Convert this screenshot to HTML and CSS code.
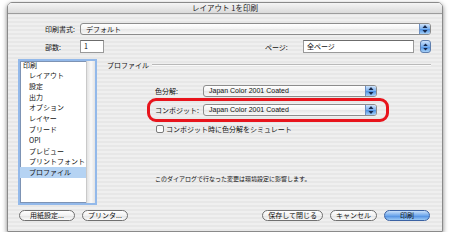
FILE: index.html
```html
<!DOCTYPE html>
<html lang="ja">
<head>
    <meta charset="UTF-8">
    <title>レイアウト 1を印刷</title>
    <link rel="stylesheet" href="styles.css">
</head>
<body>
    <div class="window">
        <div class="titlebar">レイアウト 1を印刷</div>
        <div class="content">
            <!-- Print style -->
            <div class="row row-style">
                <span class="label">印刷書式:</span>
                <div class="popup popup-style">
                    <span class="popup-text">デフォルト</span>
                    <span class="popup-arrows"><svg viewBox="0 0 10 12" width="10" height="12"><polygon points="5,2 7.5,5 2.5,5"/><polygon points="2.5,7 7.5,7 5,10"/></svg></span>
                </div>
            </div>

            <!-- Copies / pages -->
            <div class="row row-copies">
                <span class="label">部数:</span>
                <div class="field field-copies">1</div>
                <span class="label label-pages">ページ:</span>
                <div class="field field-pages">全ページ</div>
                <span class="stepper"><svg viewBox="0 0 10 12" width="10" height="12"><polygon points="5,2 7.5,5 2.5,5"/><polygon points="2.5,7 7.5,7 5,10"/></svg></span>
            </div>

            <div class="main">
                <div class="listbox">
                    <ul class="list">
                        <li class="list-root">印刷</li>
                        <li>レイアウト</li>
                        <li>設定</li>
                        <li>出力</li>
                        <li>オプション</li>
                        <li>レイヤー</li>
                        <li>ブリード</li>
                        <li>OPI</li>
                        <li>プレビュー</li>
                        <li>プリントフォント</li>
                        <li class="selected">プロファイル</li>
                    </ul>
                    <div class="scrollbar"></div>
                </div>

                <div class="panel">
                    <div class="group-title"><span>プロファイル</span></div>
                    <div class="group-body">
                        <div class="prop-row prop-sep">
                            <span class="prop-label">色分解:</span>
                            <div class="popup popup-profile">
                                <span class="popup-text latin">Japan Color 2001 Coated</span>
                                <span class="popup-arrows"><svg viewBox="0 0 10 12" width="10" height="12"><polygon points="5,2 7.5,5 2.5,5"/><polygon points="2.5,7 7.5,7 5,10"/></svg></span>
                            </div>
                        </div>
                        <div class="prop-row highlight">
                            <span class="prop-label">コンポジット:</span>
                            <div class="popup popup-profile">
                                <span class="popup-text latin">Japan Color 2001 Coated</span>
                                <span class="popup-arrows"><svg viewBox="0 0 10 12" width="10" height="12"><polygon points="5,2 7.5,5 2.5,5"/><polygon points="2.5,7 7.5,7 5,10"/></svg></span>
                            </div>
                        </div>
                        <div class="check-row">
                            <span class="checkbox"></span>
                            <span>コンポジット時に色分解をシミュレート</span>
                        </div>
                    </div>
                    <p class="note">このダイアログで行なった変更は環境設定に影響します。</p>
                </div>
            </div>

            <div class="buttons">
                <div class="btn-group">
                    <div class="btn btn-page">用紙設定...</div>
                    <div class="btn">プリンタ...</div>
                </div>
                <div class="btn-group">
                    <div class="btn">保存して閉じる</div>
                    <div class="btn">キャンセル</div>
                    <div class="btn btn-default">印刷</div>
                </div>
            </div>
        </div>
    </div>
</body>
</html>
```

FILE: styles.css
```css
body {
    margin: 0;
    background: #fff;
    font-family: "Noto Sans CJK JP", "DejaVu Sans", sans-serif;
    font-size: 7px;
    color: #111;
}
.window {
    box-sizing: border-box;
    width: 436px;
    height: 230px;
    margin: 2px 0 0 7px;
    border: 1px solid #8a8a8a;
    border-radius: 5px 5px 0 0;
    background: repeating-linear-gradient(180deg, #efefef 0, #efefef 2px, #e7e7e7 2px, #e7e7e7 4px);
    box-shadow: 0 2px 5px rgba(0, 0, 0, 0.5);
    overflow: hidden;
}
.titlebar {
    height: 10px;
    line-height: 10px;
    text-align: center;
    font-size: 7.5px;
    color: #222;
    border-bottom: 1px solid #9c9c9c;
    background: linear-gradient(#f5f5f5, #dadada);
}
.content {
    padding: 0 11px 0 10px;
}
.row {
    display: flex;
    align-items: center;
}
.row-style {
    margin-top: 9px;
    height: 12px;
}
.row-copies {
    margin-top: 5px;
    height: 13px;
}
.label {
    margin-left: 27px;
    width: 35px;
}
.label-pages {
    margin-left: 161px;
    width: 38px;
}

/* popup buttons */
.popup {
    box-sizing: border-box;
    display: flex;
    height: 12px;
    border: 1px solid #8c8c8c;
    border-radius: 3px;
    background: linear-gradient(#ffffff, #f3f3f3 50%, #e6e6e6 51%, #f8f8f8);
    overflow: hidden;
}
.popup-style {
    width: 351px;
}
.popup-profile {
    width: 174px;
}
.popup-text {
    flex: 1;
    padding-left: 5px;
    line-height: 10px;
    white-space: nowrap;
}
.latin {
    font-family: "Liberation Sans", Arial, sans-serif;
}
.popup-arrows,
.stepper {
    display: flex;
    align-items: center;
    justify-content: center;
    width: 10px;
    background: linear-gradient(#cfe3fa, #79afee 50%, #4d90e2 51%, #a6d0f7);
    border-left: 1px solid #6c8fc2;
}
.popup-arrows svg,
.stepper svg {
    fill: #17294d;
}
.stepper {
    box-sizing: border-box;
    width: 11px;
    height: 13px;
    margin-left: 6px;
    border: 1px solid #5f7fae;
    border-radius: 3px;
}

/* text fields */
.field {
    box-sizing: border-box;
    height: 13px;
    padding-left: 3px;
    line-height: 11px;
    background: #fff;
    border: 1px solid #9a9a9a;
    border-top-color: #6c6c6c;
}
.field-copies {
    width: 24px;
}
.field-pages {
    width: 111px;
}

/* list + panel */
.main {
    display: flex;
    height: 146px;
    margin-top: 6px;
}
.listbox {
    box-sizing: border-box;
    display: flex;
    width: 79px;
    height: 146px;
    border: 2px solid #93b9ea;
    background: #fff;
    box-shadow: inset 0 0 0 1px #7d93b4;
}
.list {
    flex: 1;
    margin: 0;
    padding: 0;
    list-style: none;
}
.list li {
    padding-left: 9px;
    line-height: 10.8px;
    white-space: nowrap;
}
.list .list-root {
    padding-left: 3px;
    line-height: 8px;
    margin-bottom: 1px;
}
.list .selected {
    background: #b5d3f3;
}
.scrollbar {
    width: 8px;
    border-left: 1px solid #c9c9c9;
    background: linear-gradient(90deg, #e2e2e2, #f9f9f9 50%, #e4e4e4);
}
.panel {
    flex: 1;
    margin-left: 10px;
}
.group-title {
    display: flex;
    align-items: center;
    height: 10px;
    margin-top: 1px;
}
.group-title::after {
    content: "";
    flex: 1;
    height: 1px;
    margin-left: 3px;
    background: #b9b9b9;
    border-bottom: 1px solid #fafafa;
}
.group-body {
    display: flex;
    flex-direction: column;
    align-items: flex-start;
    padding-left: 48px;
}
.prop-row {
    display: flex;
    align-items: center;
}
.prop-sep {
    margin-top: 15px;
}
.prop-label {
    width: 48px;
    white-space: nowrap;
}
.highlight {
    margin: 1px 0 0 -8px;
    padding: 3px 9px 3px 5px;
    border: 3px solid #e8141c;
    border-radius: 9px;
}
.check-row {
    display: flex;
    align-items: center;
    gap: 2px;
    margin: 2px 0 0 1px;
}
.checkbox {
    box-sizing: border-box;
    width: 8px;
    height: 8px;
    border: 1px solid #7a7a7a;
    border-radius: 2px;
    background: linear-gradient(#f4f4f4, #fff);
}
.note {
    margin: 41px 0 0 48px;
    font-size: 6px;
    line-height: 8px;
}

/* bottom buttons */
.buttons {
    display: flex;
    justify-content: space-between;
    margin-top: 5px;
    padding: 0 1px;
}
.btn-group {
    display: flex;
    gap: 7px;
}
.btn {
    box-sizing: border-box;
    min-width: 46px;
    height: 11px;
    padding: 0 5px;
    line-height: 9px;
    text-align: center;
    border: 1px solid #707070;
    border-radius: 6px;
    background: linear-gradient(#ffffff, #f1f1f1 50%, #e2e2e2 51%, #fbfbfb);
}
.btn-page {
    min-width: 56px;
}
.btn-default {
    border-color: #3b62a3;
    background: linear-gradient(#c9e0fa, #70a8ec 50%, #4a8ae0 51%, #9ccaf6);
}
```
